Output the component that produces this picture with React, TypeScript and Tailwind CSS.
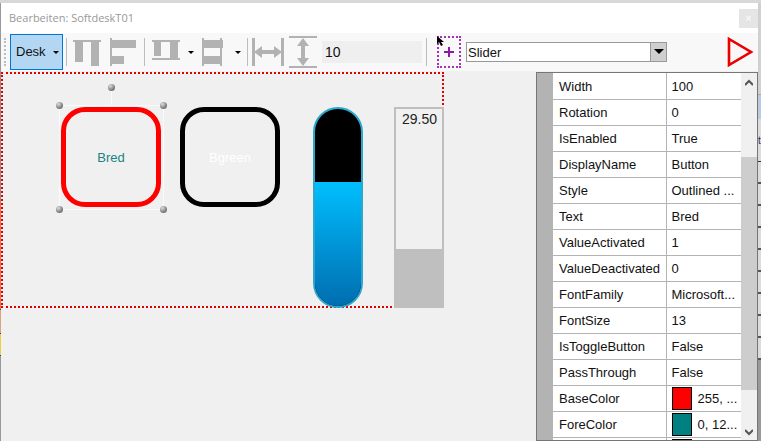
import React from "react";

const properties = [
  { name: "Width", value: "100" },
  { name: "Rotation", value: "0" },
  { name: "IsEnabled", value: "True" },
  { name: "DisplayName", value: "Button" },
  { name: "Style", value: "Outlined ..." },
  { name: "Text", value: "Bred" },
  { name: "ValueActivated", value: "1" },
  { name: "ValueDeactivated", value: "0" },
  { name: "FontFamily", value: "Microsoft..." },
  { name: "FontSize", value: "13" },
  { name: "IsToggleButton", value: "False" },
  { name: "PassThrough", value: "False" },
  { name: "BaseColor", value: "255, ...", swatch: "bg-[#ff0000]" },
  { name: "ForeColor", value: "0, 12...", swatch: "bg-[#008080]" },
  { name: "", value: "", swatch: "bg-[#008080]" },
];

const handles = ["-left-1 -top-1", "-right-1 -top-1", "-left-1 -bottom-1", "-right-1 -bottom-1"];

function Separator() {
  return <div className="h-7 w-px shrink-0 bg-[#bdbdbd]" />;
}

function Caret() {
  return (
    <svg width="6" height="3" viewBox="0 0 6 3" className="shrink-0">
      <path d="M0 0h6L3 3z" fill="#000" />
    </svg>
  );
}

function ToolIcon({ label, children, width = 28 }: { label: string; children: React.ReactNode; width?: number }) {
  return (
    <button type="button" aria-label={label} className="shrink-0">
      <svg width={width} height="32" viewBox={`0 0 ${width} 32`} fill="#b2b2b2" className="block">
        {children}
      </svg>
    </button>
  );
}

function Toolbar() {
  return (
    <div className="flex h-[38px] shrink-0 items-center bg-[#f8f8f8] pr-1">
      <div className="ml-[3px] h-7 shrink-0 border-l-2 border-dotted border-[#bcbcbc]" />
      <button
        type="button"
        className="ml-1 flex h-9 w-[53px] shrink-0 items-center justify-between border border-[#0078d7] bg-[#b3d7f3] pl-[5px] pr-[3px]"
      >
        Desk
        <Caret />
      </button>
      <div className="ml-[3px] flex items-center">
        <Separator />
        <div className="ml-1.5 mr-[7px] flex gap-2">
          <ToolIcon label="Align top">
            <path d="M0 4h28v2H0zM2 6h8v20H2zM18 6h8v24h-8z" />
          </ToolIcon>
          <ToolIcon label="Align left">
            <path d="M1 2h2v28H1zM2 4h25v8H2zM2 20h13v8H2z" />
          </ToolIcon>
        </div>
        <Separator />
        <div className="ml-[7px] flex items-center gap-2">
          <ToolIcon label="Match height">
            <path d="M0 4h28v2H0zM2 6h7v14H2zM18 6h8v18h-8zM0 22h28v2H0z" />
          </ToolIcon>
          <Caret />
        </div>
        <div className="ml-[7px] flex items-center gap-2.5">
          <ToolIcon label="Match width" width={24}>
            <path d="M1 2h2v28H1zM19 2h2v28h-2zM3 4h19v8H3zM3 20h16v8H3z" />
          </ToolIcon>
          <Caret />
        </div>
      </div>
      <div className="ml-1.5 flex items-center gap-1">
        <Separator />
        <ToolIcon label="Horizontal spacing" width={32}>
          <path d="M0 2h3v28H0zM29 2h3v28h-3zM2 16l8-6v4h12v-4l8 6-8 6v-4H10v4z" />
        </ToolIcon>
        <ToolIcon label="Vertical spacing" width={30}>
          <path d="M1 0h28v2H1zM1 30h28v2H1zM15 2l6 8h-4v12h4l-6 8-6-8h4V10H9z" />
        </ToolIcon>
        <input
          aria-label="Spacing"
          defaultValue="10"
          className="h-[22px] w-[100px] bg-[#efefef] px-[3px] text-sm outline-none"
        />
        <Separator />
      </div>
      <button
        type="button"
        aria-label="Add element"
        className="ml-2.5 flex h-8 w-6 shrink-0 items-center justify-center border-2 border-dotted border-[#a333b5]"
      >
        <svg width="10" height="10" viewBox="0 0 10 10">
          <path d="M5 0v10M0 5h10" stroke="#8c1aa5" strokeWidth="2" />
        </svg>
      </button>
      <div className="relative ml-[5px] w-[201px]">
        <select
          aria-label="Element type"
          className="h-5 w-full appearance-none border border-[#999] bg-white px-px outline-none"
        >
          <option>Slider</option>
        </select>
        <div className="pointer-events-none absolute right-px top-px flex h-[18px] w-4 items-center justify-center border-l border-[#999] bg-[#cfcfcf]">
          <svg width="10" height="5" viewBox="0 0 10 5">
            <path d="M0 0h10L5 5z" />
          </svg>
        </div>
      </div>
      <button type="button" aria-label="Run" className="ml-auto">
        <svg width="27" height="32" viewBox="0 0 27 32">
          <path d="M2 3v26l22-13z" fill="none" stroke="#eb0000" strokeWidth="2.6" />
        </svg>
      </button>
    </div>
  );
}

function Handle({ place }: { place: string }) {
  return (
    <span
      className={`absolute size-[7px] rounded-full bg-[radial-gradient(circle_at_35%_30%,#dddddd,#777777_65%)] ${place}`}
    />
  );
}

function Canvas() {
  return (
    <div className="relative h-[236px] w-[443px] shrink-0 border-2 border-dotted border-[#e00000]">
      <div className="absolute left-14 top-[31px] size-[105px] border border-[#fafafa]">
        <span className="absolute -top-4 left-[51px] h-4 w-px bg-[#fafafa]" />
        <Handle place="-top-[22px] left-[48px]" />
        {handles.map((place) => (
          <Handle key={place} place={place} />
        ))}
        <button
          type="button"
          className="m-px size-[100px] rounded-[24px] border-5 border-[#ff0000] pt-0.5 text-[#1a8383]"
        >
          Bred
        </button>
      </div>
      <button
        type="button"
        className="absolute left-[177px] top-[33px] size-[100px] rounded-[24px] border-5 border-black pt-0.5 text-white"
      >
        Bgreen
      </button>
      <div className="absolute left-[310px] top-[33px] h-[201px] w-[50px] overflow-hidden rounded-[25px] border-2 border-[#2da7cb] bg-black">
        <div className="absolute inset-x-0 bottom-0 h-[124px] bg-linear-to-b from-[#00bfff] to-[#006eb0]" />
        <input
          type="range"
          aria-label="Slider"
          defaultValue="62"
          className="absolute inset-0 h-full w-full opacity-0 [writing-mode:vertical-lr]"
        />
      </div>
      <div className="absolute left-[391px] top-[33px] flex h-[201px] w-[50px] flex-col justify-between border-2 border-[#bfbfbf] bg-[#f0f0f0]">
        <span className="pr-[5px] text-right text-sm text-[#222]">29.50</span>
        <div className="h-[57px] bg-[#bfbfbf]" />
      </div>
    </div>
  );
}

function PropertyGrid() {
  return (
    <div className="flex w-[222px] shrink-0 overflow-hidden border border-[#767676] bg-white">
      <div className="w-4 shrink-0 bg-[#b3b3b3]" />
      <div className="min-w-0 flex-1 overflow-hidden">
        <table className="w-full table-fixed border-collapse">
          <colgroup>
            <col className="w-[113px]" />
            <col />
          </colgroup>
          <tbody>
            {properties.map((p, i) => (
              <tr key={i} className="h-[26px] border-b border-[#b3b3b3]">
                <th scope="row" className="border-r border-[#b3b3b3] pb-0 pl-1.5 pr-0 pt-0.5 text-left font-normal">
                  {p.name}
                </th>
                <td className="overflow-hidden whitespace-nowrap p-0 pl-[5px]">
                  <div className="flex items-center gap-1.5">
                    {p.swatch && <span className={`h-[23px] w-5 shrink-0 border border-black ${p.swatch}`} />}
                    <span className="pt-0.5">{p.value}</span>
                  </div>
                </td>
              </tr>
            ))}
          </tbody>
        </table>
      </div>
      <div className="flex w-4 shrink-0 flex-col items-center bg-[#f0f0f0] text-[#555]">
        <svg width="8" height="84" viewBox="0 0 8 84">
          <path d="M0 12l4-4 4 4" fill="none" stroke="currentColor" strokeWidth="2" />
        </svg>
        <div className="w-full flex-1 bg-[#cdcdcd]" />
        <svg width="8" height="50" viewBox="0 0 8 50">
          <path d="M0 40l4 4 4-4" fill="none" stroke="currentColor" strokeWidth="2" />
        </svg>
      </div>
    </div>
  );
}

/* Slivers of the windows lying behind the editor, left and right of it. */
function BackdropLeft() {
  return (
    <div className="flex w-px shrink-0 flex-col bg-[#999] pt-[69px]">
      <div className="h-[130px] bg-[#a08a8c]" />
      <div className="h-[107px] bg-[#f0714a]" />
      <div className="h-[25px] border-y border-[#444] bg-[#dda184]" />
      <div className="h-[22px] border-b border-[#444] bg-[#e8d040]" />
    </div>
  );
}

function BackdropRight() {
  return (
    <div className="flex w-[3px] shrink-0 flex-col bg-[#999]">
      <div className="h-[92px] shrink-0 border-b border-[#aaa] bg-[#d0d0d0]" />
      <div className="h-6 shrink-0 bg-[#b9cbe0]" />
      <div className="flex h-[43px] shrink-0 items-center border-b border-[#333] bg-[#dcdcdc] text-[10px] text-[#223355]">
        t
      </div>
      {["a", "b", "c", "d", "e", "f", "g", "h", "i"].map((k) => (
        <div key={k} className="h-[22px] shrink-0 border-b-2 border-[#555] bg-[#dcdcdc]" />
      ))}
    </div>
  );
}

export default function App() {
  return (
    <div className="flex h-screen flex-col overflow-hidden bg-[#d8d8d8] pt-[3px] font-['Liberation_Sans',Arial,sans-serif] text-[13px] text-[#111]">
      <div className="flex min-h-0 flex-1">
        <BackdropLeft />
        <main className="relative flex min-w-0 flex-1 flex-col bg-[#f0f0f0]">
          <header className="flex h-[30px] shrink-0 items-center justify-between bg-white pl-2">
            <h1 className="font-['Open_Sans',sans-serif] text-[11px] text-[#999]">Bearbeiten: SoftdeskT01</h1>
            <button
              type="button"
              aria-label="Close"
              className="h-[19px] w-[19px] bg-[#e5e5e5] text-[11px] leading-4 text-white"
            >
              ×
            </button>
          </header>
          <Toolbar />
          <div className="flex min-h-0 flex-1 justify-between pt-px">
            <Canvas />
            <PropertyGrid />
          </div>
          <svg width="7" height="10" viewBox="0 0 7 10" className="absolute left-[436px] top-[33px]">
            <path d="M0 0v8l2-2 2 4 2-1-2-3h3z" fill="#000" />
          </svg>
        </main>
        <BackdropRight />
      </div>
    </div>
  );
}
